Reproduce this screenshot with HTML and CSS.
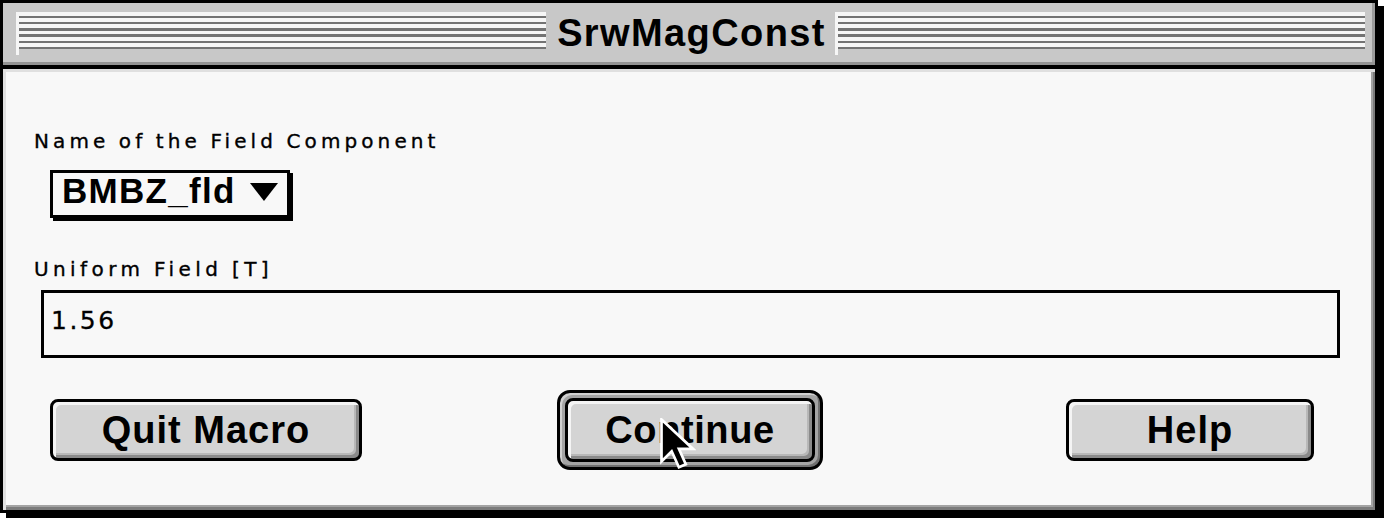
FILE: index.html
```html
<!DOCTYPE html>
<html>
<head>
<meta charset="utf-8">
<title>SrwMagConst</title>
<link rel="stylesheet" href="styles.css">
</head>
<body>
<div class="window">
  <div class="titlebar">
    <div class="stripes"></div>
    <div class="title">SrwMagConst</div>
    <div class="stripes"></div>
  </div>
  <div class="content">
    <div class="label label-first">Name of the Field Component</div>
    <div class="popup">
      <span class="popup-text">BMBZ_fld</span>
      <span class="popup-arrow"></span>
    </div>
    <div class="label label-second">Uniform Field [T]</div>
    <div class="field">1.56</div>
    <div class="buttons">
      <div class="btn btn-quit">Quit Macro</div>
      <div class="default-ring">
        <div class="btn btn-continue">Continue</div>
        <svg class="cursor" viewBox="0 0 12 17" width="36" height="51">
          <path d="M0.5 0.5 L0.5 14.5 L3.9 11.1 L6.3 16.4 L8.6 15.4 L6.3 10.3 L11 10.3 Z" fill="#000" stroke="#fff" stroke-width="0.9" stroke-linejoin="miter"/>
        </svg>
      </div>
      <div class="btn btn-help">Help</div>
    </div>
  </div>
</div>
</body>
</html>
```

FILE: styles.css
```css
* {
  box-sizing: border-box;
}

html, body {
  margin: 0;
  padding: 0;
  background: #ffffff;
}

body {
  width: 1384px;
  height: 518px;
  overflow: hidden;
}

.window {
  width: 1378px;
  height: 513px;
  border: 3px solid #000;
  box-shadow: 6px 6px 0 #000;
  background: #c8c8c8;
  display: flex;
  flex-direction: column;
}

.titlebar {
  flex: none;
  height: 62px;
  display: flex;
  align-items: flex-start;
  padding: 9px 10px 0 13px;
  background: #c8c8c8;
  border-bottom: 3px solid #939393;
  box-shadow: inset -3px 0 0 #9c9c9c;
}

.stripes {
  flex: 1;
  height: 43px;
  border-left: 3px solid #f6f6f6;
  background-image: repeating-linear-gradient(to bottom,
    #f6f6f6 0px, #f6f6f6 3.8px,
    #737373 3.8px, #737373 6.2px);
  background-size: 100% 37px;
  background-repeat: no-repeat;
}

.title {
  flex: none;
  padding: 0 9px 0 11px;
  font-family: "Liberation Sans", Arial, sans-serif;
  font-weight: bold;
  font-size: 38px;
  line-height: 42px;
  letter-spacing: 1.4px;
  color: #000;
}

.content {
  flex: 1;
  background: #f8f8f8;
  border-top: 4px solid #000;
  box-shadow: inset 3px 3px 0 #e0e0e0, inset -2px -3px 0 #7c7c7c, inset -4px -5px 0 #a4a4a4;
  padding-top: 61px;
  display: flex;
  flex-direction: column;
  align-items: flex-start;
}

.label {
  margin-left: 31px;
  font-family: "DejaVu Sans", Verdana, sans-serif;
  font-size: 20px;
  line-height: 23px;
  letter-spacing: 4.1px;
  word-spacing: -1px;
  -webkit-text-stroke: 0.35px #000;
  color: #000;
}

.popup {
  margin-top: 17px;
  margin-left: 47px;
  width: 240px;
  height: 48px;
  border: 3px solid #000;
  box-shadow: 3px 3px 0 #000;
  background: #f8f8f8;
  display: flex;
  justify-content: space-between;
  align-items: flex-start;
  padding: 0 9px 0 9px;
}

.popup-text {
  font-family: "Liberation Sans", Arial, sans-serif;
  font-weight: bold;
  font-size: 35px;
  line-height: 36px;
  letter-spacing: 1.3px;
  color: #000;
}

.popup-arrow {
  margin-top: 10px;
  width: 0;
  height: 0;
  border-left: 14px solid transparent;
  border-right: 14px solid transparent;
  border-top: 18px solid #000;
}

.label-second {
  margin-top: 40px;
  letter-spacing: 4.4px;
}

.field {
  margin-top: 9px;
  margin-left: 38px;
  width: 1299px;
  height: 68px;
  border: 3px solid #000;
  background: #f8f8f8;
  padding: 13px 0 0 7px;
  font-family: "DejaVu Sans", Verdana, sans-serif;
  font-size: 25px;
  line-height: 30px;
  letter-spacing: 2.5px;
  -webkit-text-stroke: 0.3px #000;
  color: #000;
}

.buttons {
  margin-top: 32px;
  height: 80px;
  display: flex;
  align-items: center;
  padding-left: 47px;
}

.btn {
  height: 62px;
  border: 3px solid #000;
  border-radius: 8px;
  background: #d4d4d4;
  box-shadow: inset 3px 3px 0 #f4f4f4, inset -3px -3px 0 #8a8a8a, inset -5px -5px 0 #b8b8b8;
  display: flex;
  align-items: center;
  justify-content: center;
  font-family: "Liberation Sans", Arial, sans-serif;
  font-weight: bold;
  font-size: 38px;
  letter-spacing: 1px;
  color: #000;
}

.btn-quit {
  width: 312px;
}

.default-ring {
  position: relative;
  margin-left: 195px;
  width: 266px;
  height: 80px;
  border: 3px solid #000;
  border-radius: 13px;
  padding: 5px;
  background: #a4a4a4;
  box-shadow: inset 2px 2px 0 #d0d0d0, inset -2px -2px 0 #707070;
}

.btn-continue {
  width: 100%;
  height: 64px;
  letter-spacing: 0.6px;
}

.cursor {
  position: absolute;
  left: 100px;
  top: 25px;
}

.btn-help {
  margin-left: 243px;
  width: 248px;
}
```
